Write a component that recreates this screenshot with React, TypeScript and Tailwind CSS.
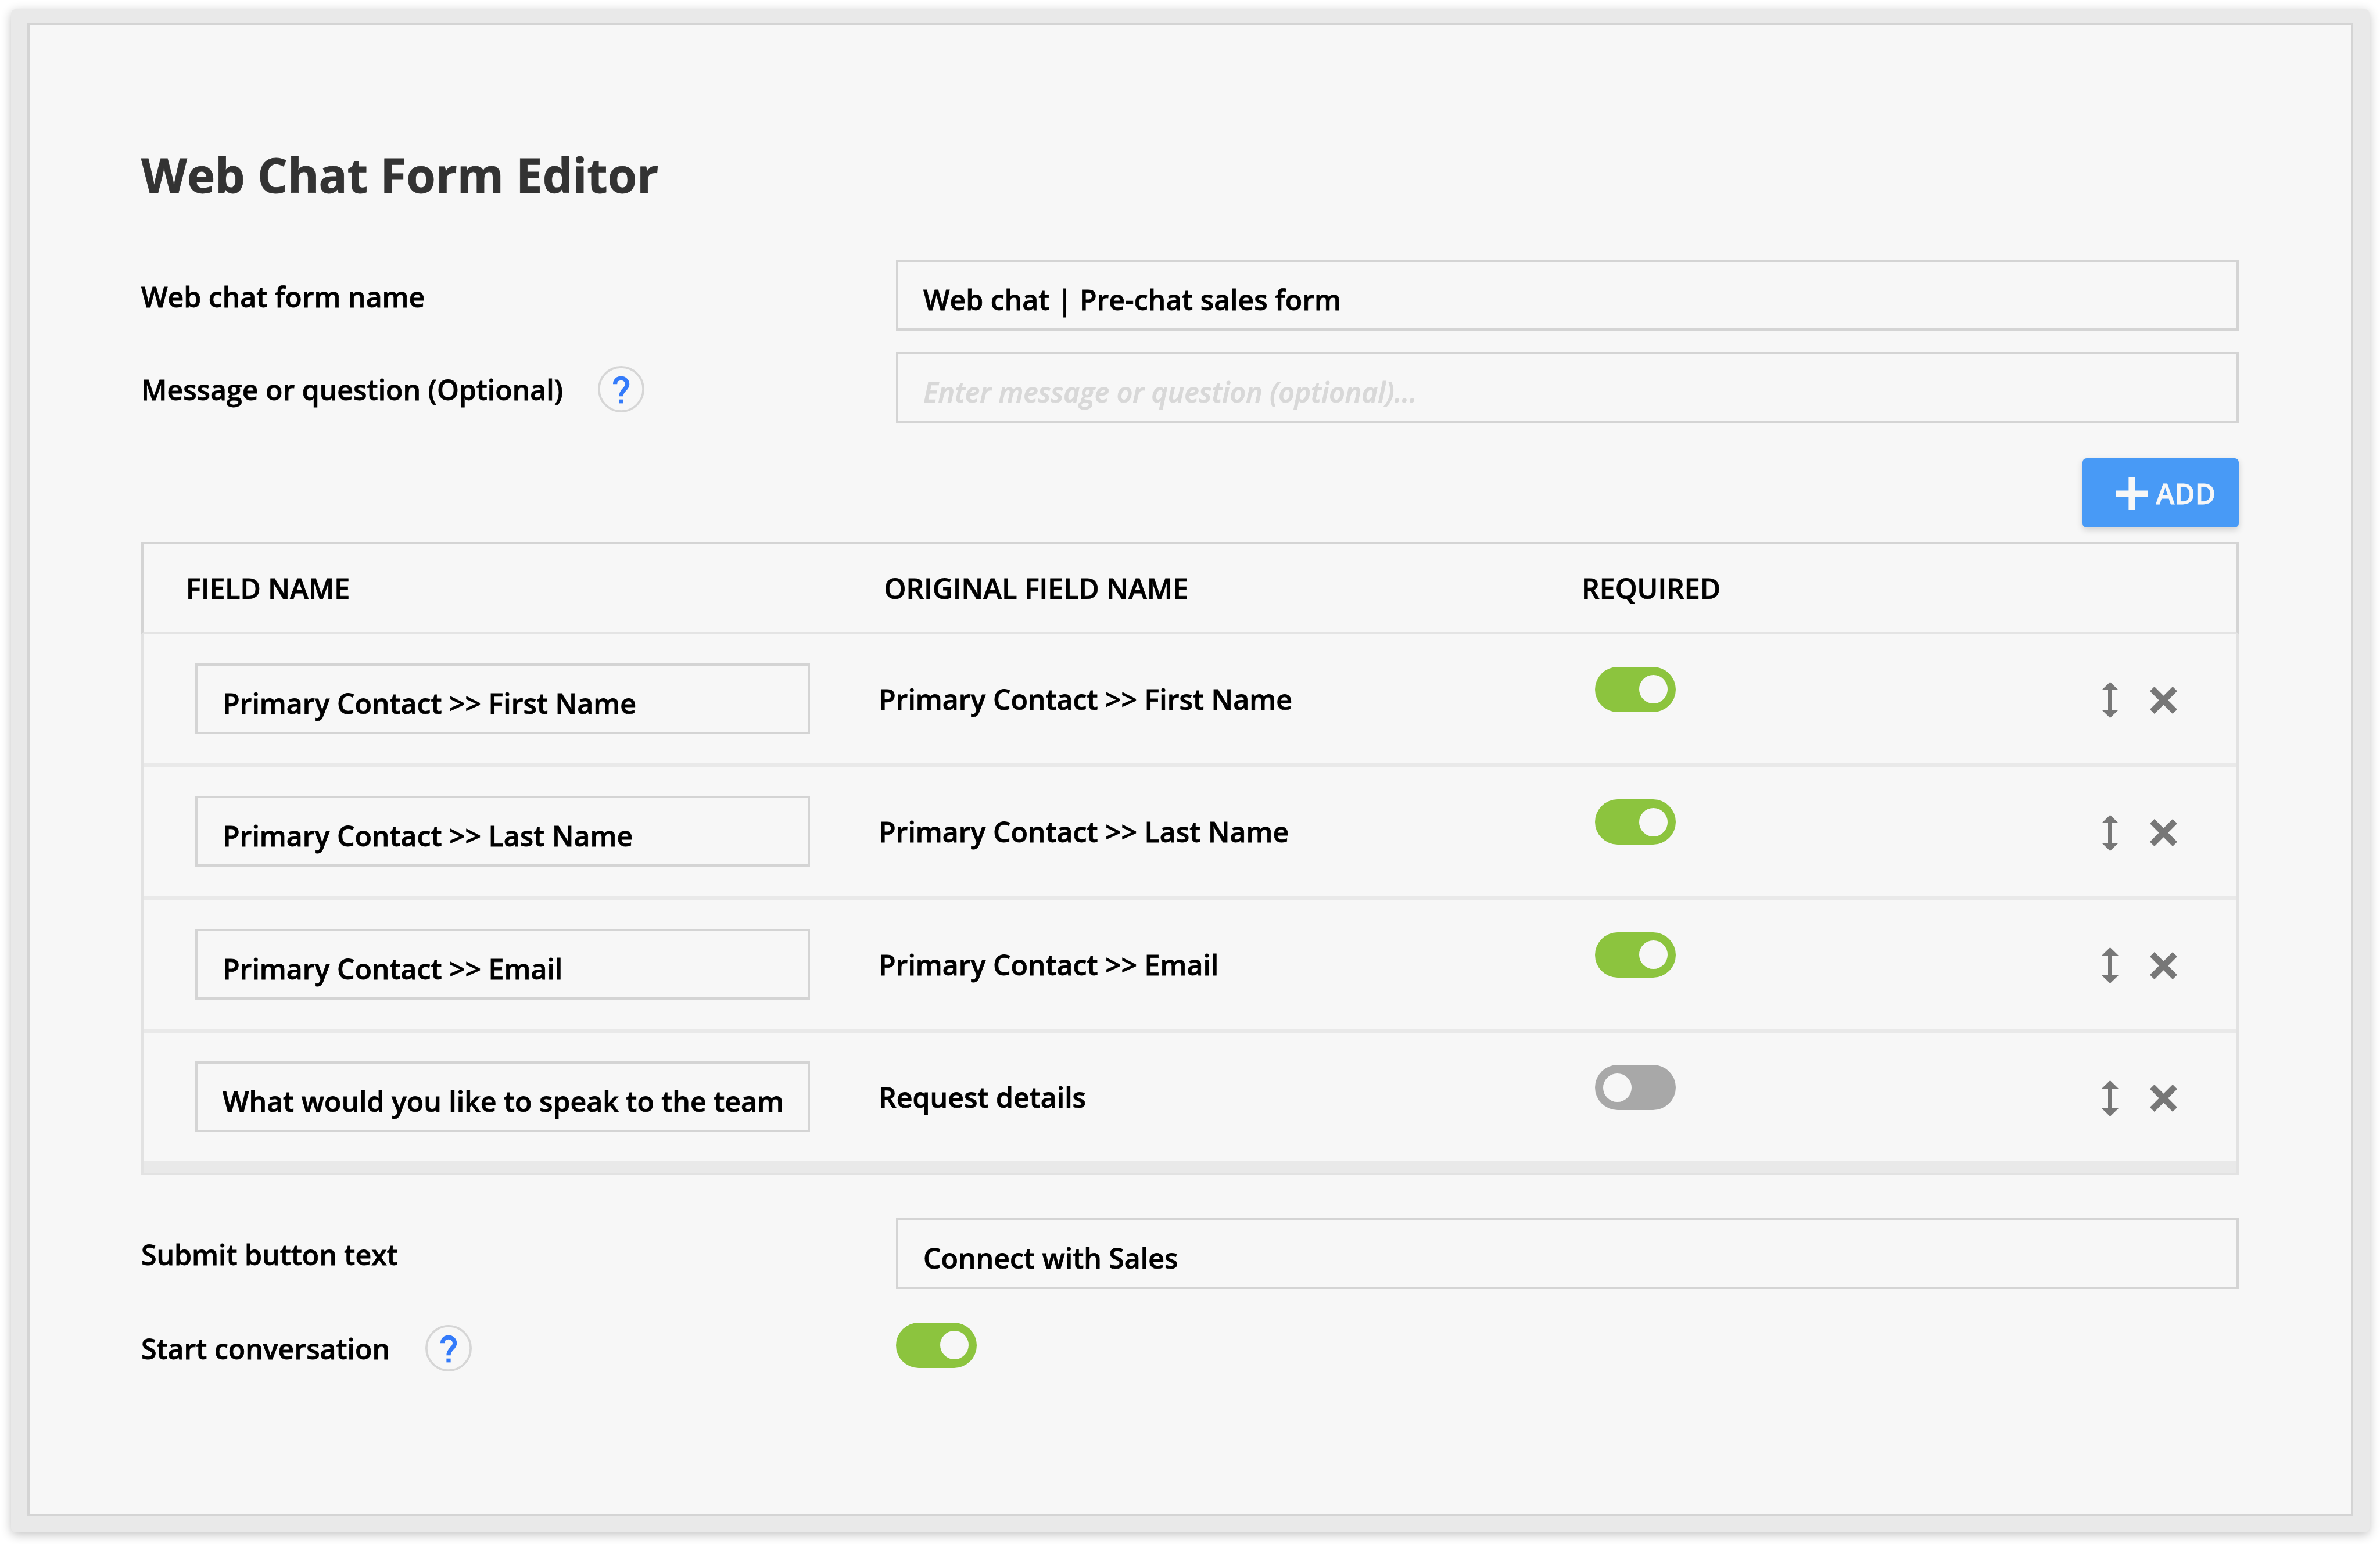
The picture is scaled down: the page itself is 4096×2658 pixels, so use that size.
import { useState } from 'react'

type Field = {
  id: number
  name: string
  original: string
  required: boolean
}

const initialFields: Field[] = [
  { id: 1, name: 'Primary Contact >> First Name', original: 'Primary Contact >> First Name', required: true },
  { id: 2, name: 'Primary Contact >> Last Name', original: 'Primary Contact >> Last Name', required: true },
  { id: 3, name: 'Primary Contact >> Email', original: 'Primary Contact >> Email', required: true },
  { id: 4, name: 'What would you like to speak to the team', original: 'Request details', required: false },
]

const inputClass =
  'block h-[122px] w-full rounded-none border-4 border-[#d4d4d4] bg-transparent pt-[14px] pr-[20px] pl-[43px] font-semibold text-black outline-none placeholder:italic placeholder:text-[#d8d8d8] placeholder:opacity-100'

function Toggle({ on, onChange }: { on: boolean; onChange: () => void }) {
  return (
    <button
      type="button"
      role="switch"
      aria-checked={on}
      onClick={onChange}
      className={`flex h-[78px] w-[139px] shrink-0 items-center rounded-full px-[14px] ${
        on ? 'justify-end bg-[#8cc43e]' : 'justify-start bg-[#a8a8a8]'
      }`}
    >
      <span className="h-[49px] w-[49px] rounded-full bg-[#f7f7f7]" />
    </button>
  )
}

function HelpIcon() {
  return (
    <svg viewBox="0 0 86 86" className="h-[80px] w-[80px] shrink-0" fill="none">
      <circle cx="43" cy="43" r="41" stroke="#d6d6d6" strokeWidth="4" />
      <path
        d="M31.8 33.5C31.8 27 36.8 22.8 43 22.8S54.4 27.4 54.4 33.8C54.4 43 43 44.2 43 56.2"
        stroke="#347bfa"
        strokeWidth="7.8"
      />
      <path d="M39.1 62h7.8v7.2h-7.8z" fill="#347bfa" />
    </svg>
  )
}

function MoveIcon() {
  return (
    <svg viewBox="0 0 29 62" className="h-[62px] w-[29px]" fill="#777777">
      <path d="M14.5 0 29 14H18V48H29L14.5 62 0 48H11V14H0z" />
    </svg>
  )
}

function RemoveIcon() {
  return (
    <svg viewBox="0 0 47 47" className="h-[47px] w-[47px]" fill="#777777">
      <path d="M7.8 0 23.5 15.7 39.2 0 47 7.8 31.3 23.5 47 39.2 39.2 47 23.5 31.3 7.8 47 0 39.2 15.7 23.5 0 7.8z" />
    </svg>
  )
}

export default function App() {
  const [fields, setFields] = useState(initialFields)
  const [startConversation, setStartConversation] = useState(true)

  const toggleRequired = (id: number) =>
    setFields((list) => list.map((f) => (f.id === id ? { ...f, required: !f.required } : f)))

  const removeField = (id: number) => setFields((list) => list.filter((f) => f.id !== id))

  return (
    <div className="h-[2658px] w-[4096px] overflow-hidden bg-white pt-[16px] pl-[18.5px] font-['Open_Sans',sans-serif] text-[48.2px] leading-[66px] font-semibold text-black [-webkit-text-stroke:0.8px]">
      <div className="h-[2621.5px] w-[4059px] rounded-[8px] bg-[#e9e9e9] pt-[23px] pr-[28px] pb-[28px] pl-[28.5px] shadow-[0_4px_18px_rgba(0,0,0,0.24)]">
        <main className="h-full border-4 border-[#d4d4d4] bg-[#f7f7f7] pt-[203px] pr-[193px] pl-[192px]">
          <h1 className="text-[81.6px] leading-[110px] font-bold text-[#333333]">Web Chat Form Editor</h1>

          <section className="mt-[91px] flex flex-col gap-[37px]">
            <div className="flex h-[122px] items-center">
              <div className="w-[1299px] shrink-0 pt-[3px]">Web chat form name</div>
              <input className={inputClass} defaultValue="Web chat | Pre-chat sales form" />
            </div>
            <div className="flex h-[122px] items-center">
              <div className="flex w-[1299px] shrink-0 items-center gap-[59.5px] pt-[6px]">
                Message or question (Optional)
                <HelpIcon />
              </div>
              <input className={inputClass} placeholder="Enter message or question (optional)..." />
            </div>
          </section>

          <div className="mt-[61px] flex justify-end">
            <button
              type="button"
              className="flex h-[119px] w-[269px] items-center rounded-[7px] bg-[#489af6] pl-[57px] text-[#f7f7f7] shadow-[0_4px_12px_rgba(0,0,0,0.16)]"
            >
              <svg viewBox="0 0 56 56" className="mt-[3px] mr-[14px] h-[56px] w-[56px]" fill="currentColor">
                <path d="M22.4 0h11.2v22.4H56v11.2H33.6V56H22.4V33.6H0V22.4h22.4z" />
              </svg>
              ADD
            </button>
          </div>

          <section className="mt-[24.5px]">
            <div className="grid h-[159.4px] grid-cols-[1201.5px_1200.5px_1fr] items-center border-4 border-[#d4d4d4] border-b-[#e4e4e4] pl-[73px]">
              <div>FIELD NAME</div>
              <div>ORIGINAL FIELD NAME</div>
              <div>REQUIRED</div>
            </div>
            <div className="border-x-4 border-b-4 border-[#e2e2e2]">
              {fields.map((field) => (
                <div
                  key={field.id}
                  className="flex h-[228.6px] items-center border-b-[7px] border-[#e9e9e9] pr-[102px] pl-[89px]"
                >
                  <div className="w-[1058px] shrink-0">
                    <input className={inputClass} defaultValue={field.name} />
                  </div>
                  <div className="ml-[118px] w-[1233px]">{field.original}</div>
                  <div className="pb-[32px]">
                    <Toggle on={field.required} onChange={() => toggleRequired(field.id)} />
                  </div>
                  <div className="ml-auto flex items-center gap-[54px] pt-[5px]">
                    <MoveIcon />
                    <button type="button" aria-label="Remove field" onClick={() => removeField(field.id)}>
                      <RemoveIcon />
                    </button>
                  </div>
                </div>
              ))}
              <div className="h-[12.5px] bg-[#e9e9e9]" />
            </div>
          </section>

          <section className="mt-[74px]">
            <div className="flex h-[122px] items-center">
              <div className="w-[1299px] shrink-0 pt-[3px]">Submit button text</div>
              <input className={inputClass} defaultValue="Connect with Sales" />
            </div>
            <div className="mt-[58px] flex items-start">
              <div className="mt-[4px] flex w-[1299px] shrink-0 items-center gap-[61px]">
                Start conversation
                <HelpIcon />
              </div>
              <Toggle on={startConversation} onChange={() => setStartConversation((v) => !v)} />
            </div>
          </section>
        </main>
      </div>
    </div>
  )
}
